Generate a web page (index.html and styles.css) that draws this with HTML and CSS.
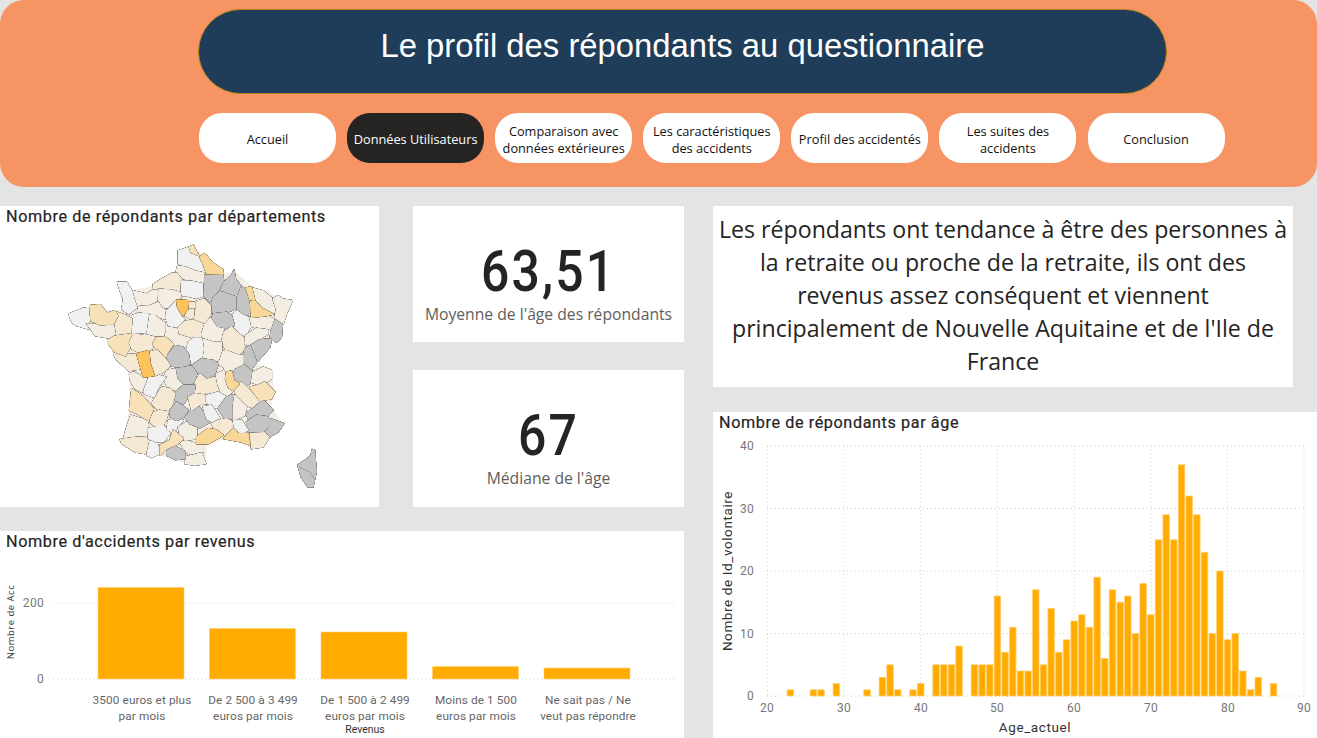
FILE: index.html
```html
<!DOCTYPE html>
<html lang="fr">
<head>
<meta charset="utf-8">
<title>Le profil des répondants au questionnaire</title>
<link rel="stylesheet" href="styles.css">
</head>
<body>
<div class="page">
  <header class="banner">
    <h1 class="headline">Le profil des répondants au questionnaire</h1>
    <nav class="nav">
      <a class="pill single">Accueil</a>
      <a class="pill active single">Données Utilisateurs</a>
      <a class="pill">Comparaison avec données extérieures</a>
      <a class="pill">Les caractéristiques des accidents</a>
      <a class="pill single">Profil des accidentés</a>
      <a class="pill narrow">Les suites des accidents</a>
      <a class="pill single">Conclusion</a>
    </nav>
  </header>
  <main class="board">
    <div class="left">
      <div class="top-row">
        <section class="card map-card">
          <h2 class="card-title">Nombre de répondants par départements</h2>
          <svg class="map" viewBox="0 78 1137 843" aria-label="Carte de France">
            <polygon class="land" points="535,150 580,135 670,218 705,212 760,260 875,302 850,370 815,420 770,490 815,510 825,575 815,620 850,670 800,715 780,745 680,715 620,735 615,790 555,790 480,765 365,725 385,640 390,520 345,470 325,420 260,385 210,365 210,340 268,318 345,330 370,325 352,250 395,270 460,255 530,215"/>
            <g class="dep">
              <polygon class="d4" points="563,140 580,133 590,155 600,168 585,168 570,158"/>
              <polygon class="d1" points="535,150 563,140 570,158 600,170 612,195 615,215 590,210 560,198 535,188"/>
              <polygon class="d2" points="533,195 560,200 590,212 615,217 612,248 575,240 545,232 528,215"/>
              <polygon class="d3" points="460,250 485,235 515,218 530,217 545,235 540,272 510,268 475,265 458,265"/>
              <polygon class="d1" points="545,240 575,242 612,250 612,285 590,292 560,285 543,285"/>
              <polygon class="d0" points="615,222 668,222 672,245 660,272 640,290 635,310 612,285"/>
              <polygon class="d0" points="672,245 697,222 702,208 707,235 725,258 718,280 690,282 660,272"/>
              <polygon class="d0" points="640,290 660,272 690,282 712,290 712,322 680,335 640,340 635,310"/>
              <polygon class="d0" points="712,290 725,258 745,272 750,310 755,345 725,340 712,322"/>
              <polygon class="d2" points="758,262 790,270 820,295 830,320 822,338 785,322 765,300"/>
              <polygon class="d2" points="820,295 835,285 850,295 878,300 860,340 850,370 825,355 830,325"/>
              <polygon class="d0" points="825,357 848,372 845,410 830,425 812,410 815,380"/>
              <polygon class="d2" points="740,350 755,350 800,345 822,355 812,385 770,382 750,375"/>
              <polygon class="d1" points="695,345 712,330 725,340 745,350 752,378 735,410 715,398 700,372"/>
              <polygon class="d0" points="640,340 680,335 695,345 703,372 690,385 660,385 632,365"/>
              <polygon class="d3" points="580,305 612,295 632,315 632,342 615,368 585,365 578,340"/>
              <polygon class="d2" points="475,265 515,268 540,275 543,290 530,298 510,320 485,322 472,300"/>
              <polygon class="d2" points="398,270 440,280 458,268 472,268 470,300 450,312 408,318 398,290"/>
              <polygon class="d1" points="352,245 380,245 395,270 400,292 410,320 385,340 365,325 370,295 360,270"/>
              <polygon class="d2" points="415,318 450,315 475,305 485,322 500,330 495,355 465,345 440,335 412,335"/>
              <polygon class="d1" points="510,320 530,298 545,345 555,360 535,380 505,375 497,350 500,330"/>
              <polygon class="d3" points="535,380 555,362 580,358 612,372 605,410 580,412 538,398"/>
              <polygon class="d2" points="615,370 632,352 650,380 672,385 672,395 665,420 640,425 608,415 605,400"/>
              <polygon class="d3" points="672,395 695,378 715,398 737,415 735,450 710,462 680,450 665,425"/>
              <polygon class="d2" points="737,405 770,383 805,388 805,400 780,415 752,435 735,430"/>
              <polygon class="d0" points="752,435 780,418 815,415 810,440 775,480 765,470 745,440"/>
              <polygon class="d0" points="735,445 750,435 765,470 770,485 752,510 735,505 730,480"/>
              <polygon class="d0" points="700,505 730,490 752,510 765,515 760,540 735,560 705,540"/>
              <polygon class="d2" points="760,515 790,500 815,510 815,535 800,545 775,552 755,545"/>
              <polygon class="d3" points="705,565 725,545 750,570 780,600 765,625 740,615 705,580"/>
              <polygon class="d2" points="660,455 680,450 710,462 730,465 730,490 700,505 700,510 678,515 672,500 655,490"/>
              <polygon class="d2" points="608,415 640,425 665,425 665,450 655,480 635,478 605,475 610,445"/>
              <polygon class="d1" points="580,412 605,412 610,445 605,475 575,495 557,460 565,425"/>
              <polygon class="d0" points="525,435 550,440 565,460 570,490 545,502 510,495 500,468"/>
              <polygon class="d0" points="575,495 605,475 640,480 655,490 645,520 620,537 590,518"/>
              <polygon class="d0" points="525,505 545,502 575,497 590,518 585,545 560,555 530,535"/>
              <polygon class="d2" points="650,520 672,510 680,535 700,570 680,590 660,575 645,545"/>
              <polygon class="d3" points="585,545 600,520 620,537 645,530 650,555 660,578 620,578 585,580"/>
              <polygon class="d2" points="500,510 525,505 530,535 550,555 530,570 505,565 490,535"/>
              <polygon class="d0" points="520,580 550,555 585,555 582,580 565,590 550,610 525,600"/>
              <polygon class="d3" points="460,600 485,560 510,565 525,580 520,600 510,630 480,635 455,610"/>
              <polygon class="d1" points="430,560 445,530 475,525 497,530 475,560 462,590 432,580"/>
              <polygon class="d2" points="388,520 400,515 430,530 440,535 430,560 425,575 405,565 390,540"/>
              <polygon class="d3" points="340,460 350,450 375,460 410,462 420,505 385,510 350,478"/>
              <polygon class="d4" points="325,410 345,400 395,395 390,440 375,465 345,455 325,430"/>
              <polygon class="d3" points="400,400 430,405 470,405 455,445 415,455 395,445 388,425"/>
              <polygon class="d4" points="470,410 490,405 520,430 500,460 495,478 465,440 458,430"/>
              <polygon class="d3" points="450,455 470,448 500,480 510,495 490,515 465,525 455,490"/>
              <polygon class="d2" points="435,345 465,345 495,368 495,390 490,405 465,405 437,398"/>
              <polygon class="d1" points="395,345 415,338 445,340 437,395 395,398"/>
              <polygon class="d3" points="350,335 380,345 395,355 392,395 345,402 338,375"/>
              <polygon class="d1" points="205,340 250,322 268,325 270,360 258,368 265,385 230,375 215,365"/>
              <polygon class="d2" points="260,370 300,372 340,375 345,400 325,412 285,405"/>
              <polygon class="d4" points="268,315 300,312 320,338 345,330 352,345 340,370 300,372 272,360"/>
              <polygon class="d2" points="392,645 440,660 445,675 440,705 410,710 370,715 380,680"/>
              <polygon class="d3" points="360,718 400,712 440,710 450,725 435,760 405,755 365,730"/>
              <polygon class="d1" points="450,720 470,725 480,760 455,772 440,765"/>
              <polygon class="d1" points="443,685 490,675 510,700 490,725 470,725 445,715"/>
              <polygon class="d3" points="450,640 478,630 505,635 497,660 490,675 460,675 450,665"/>
              <polygon class="d1" points="505,660 530,655 550,660 525,690 500,690"/>
              <polygon class="d2" points="540,725 560,722 590,730 610,735 610,755 580,765 555,755"/>
              <polygon class="d2" points="555,770 580,765 605,758 617,790 585,795 555,790"/>
              <polygon class="d2" points="535,680 560,665 590,680 590,715 555,720 540,705"/>
              <polygon class="d0" points="555,650 590,612 615,640 632,665 600,682 570,670"/>
              <polygon class="d0" points="510,630 530,605 565,630 550,650 530,660 510,650"/>
              <polygon class="d3" points="565,590 585,580 620,585 622,610 600,612 575,630"/>
              <polygon class="d1" points="620,585 655,575 680,590 665,620 640,622 620,605"/>
              <polygon class="d1" points="610,620 635,615 660,655 640,667 620,655"/>
              <polygon class="d0" points="680,590 705,582 700,620 695,655 675,655 655,625"/>
              <polygon class="d2" points="705,585 740,620 735,645 700,660 700,620"/>
              <polygon class="d0" points="765,620 790,600 820,628 800,650 770,645 745,655 740,640"/>
              <polygon class="d0" points="740,665 770,645 805,650 810,680 795,695 745,695"/>
              <polygon class="d0" points="810,655 852,670 835,695 805,712 795,697 810,680"/>
              <polygon class="d3" points="752,700 795,697 808,712 790,740 755,745"/>
              <polygon class="d3" points="635,670 655,660 680,655 700,665 700,685 680,710 665,700 640,680"/>
              <polygon class="d1" points="700,662 725,660 745,690 725,700 705,685"/>
              <polygon class="d5" points="672,715 700,685 715,700 745,700 750,735 725,725 700,720"/>
              <polygon class="d5" points="590,710 625,685 650,690 670,705 625,730 590,730"/>
              <polygon class="d0" points="500,750 520,735 555,755 555,775 525,778 500,765"/>
              <polygon class="d4" points="480,735 510,720 520,690 550,715 535,730 500,745 480,765"/>
              <polygon class="d4" points="395,565 430,590 460,625 445,660 410,640 388,630"/>
              <polygon class="d4" points="750,560 775,555 795,545 825,575 815,595 780,600"/>
              <polygon class="d5" points="680,515 695,512 702,540 718,550 700,570 685,560 677,535"/>
              <polygon class="d5" points="600,168 615,158 630,178 650,195 668,205 670,220 620,218 612,195"/>
              <polygon class="d5" points="738,262 755,258 765,300 752,302"/>
              <polygon class="d5" points="752,302 765,300 785,322 820,340 800,345 755,350"/>
              <polygon class="d3" points="565,305 585,305 585,325 565,325"/>
              <polygon class="d3" points="555,345 565,325 582,325 580,350 570,355"/>
              <polygon class="d6" points="530,298 565,300 563,325 548,345 533,320"/>
              <polygon class="d6" points="410,460 445,450 450,490 462,525 430,530 420,495"/>
              <polygon class="d0" points="938,748 945,750 948,790 950,815 940,860 925,860 905,830 895,795 925,775 935,765"/>
            </g>
            <polyline class="seam" points="898,800 930,815 945,838"/>
          </svg>
        </section>
        <div class="kpis">
          <section class="card kpi">
            <div class="kpi-value">63,51</div>
            <div class="kpi-label">Moyenne de l'âge des répondants</div>
          </section>
          <section class="card kpi">
            <div class="kpi-value">67</div>
            <div class="kpi-label">Médiane de l'âge</div>
          </section>
        </div>
      </div>
      <section class="card revenue-card">
        <h2 class="card-title">Nombre d'accidents par revenus</h2>
        <svg class="revenue-chart" viewBox="0 552 684 186">
          <g class="grid">
            <line x1="53" y1="603" x2="676" y2="603"/>
            <line x1="53" y1="679" x2="676" y2="679"/>
          </g>
          <g class="bars">
            <rect x="98" y="587.5" width="86" height="91.5"/>
            <rect x="209.5" y="628.5" width="86" height="50.5"/>
            <rect x="321" y="632" width="86" height="47"/>
            <rect x="432.5" y="666.5" width="86" height="12.5"/>
            <rect x="544" y="668" width="86" height="11"/>
          </g>
          <g class="tick end">
            <text x="44" y="607">200</text>
            <text x="44" y="683">0</text>
          </g>
          <g class="tick mid small">
            <text x="142" y="704">3500 euros et plus</text>
            <text x="142" y="720">par mois</text>
            <text x="253" y="704">De 2 500 à 3 499</text>
            <text x="253" y="720">euros par mois</text>
            <text x="365" y="704">De 1 500 à 2 499</text>
            <text x="365" y="720">euros par mois</text>
            <text x="476" y="704">Moins de 1 500</text>
            <text x="476" y="720">euros par mois</text>
            <text x="588" y="704">Ne sait pas / Ne</text>
            <text x="588" y="720">veut pas répondre</text>
          </g>
          <text class="axis-mini" x="365" y="733">Revenus</text>
          <text class="axis-mini-v" transform="translate(14,622) rotate(-90)">Nombre de Acc</text>
        </svg>
      </section>
    </div>
    <div class="right">
      <section class="card note">Les répondants ont tendance à être des personnes à<br>la retraite ou proche de la retraite, ils ont des<br>revenus assez conséquent et viennent<br>principalement de Nouvelle Aquitaine et de l'Ile de<br>France</section>
      <section class="card age-card">
        <h2 class="card-title">Nombre de répondants par âge</h2>
        <svg class="age-chart" viewBox="713 433 604 305">
          <g class="grid">
            <line x1="767" y1="446" x2="1304" y2="446"/>
            <line x1="767" y1="508.5" x2="1304" y2="508.5"/>
            <line x1="767" y1="571" x2="1304" y2="571"/>
            <line x1="767" y1="633.5" x2="1304" y2="633.5"/>
            <line x1="767" y1="696" x2="1304" y2="696"/>
            <line x1="767.5" y1="446" x2="767.5" y2="696"/>
            <line x1="844" y1="446" x2="844" y2="696"/>
            <line x1="920.5" y1="446" x2="920.5" y2="696"/>
            <line x1="997.5" y1="446" x2="997.5" y2="696"/>
            <line x1="1074" y1="446" x2="1074" y2="696"/>
            <line x1="1151" y1="446" x2="1151" y2="696"/>
            <line x1="1227.5" y1="446" x2="1227.5" y2="696"/>
            <line x1="1304" y1="446" x2="1304" y2="696"/>
          </g>
          <g class="bars hist" transform="translate(767.3,696) scale(7.67,-6.25)">
            <rect x="2.58" width=".85" height="1"/><rect x="5.58" width=".85" height="1"/><rect x="6.58" width=".85" height="1"/><rect x="8.58" width=".85" height="2"/>
            <rect x="12.58" width=".85" height="1"/><rect x="14.58" width=".85" height="3"/><rect x="15.58" width=".85" height="5"/><rect x="16.58" width=".85" height="1"/>
            <rect x="18.58" width=".85" height="1"/><rect x="19.58" width=".85" height="2"/><rect x="21.58" width=".85" height="5"/><rect x="22.58" width=".85" height="5"/>
            <rect x="23.58" width=".85" height="5"/><rect x="24.58" width=".85" height="8"/><rect x="26.58" width=".85" height="5"/><rect x="27.58" width=".85" height="5"/>
            <rect x="28.58" width=".85" height="5"/><rect x="29.58" width=".85" height="16"/><rect x="30.58" width=".85" height="7"/><rect x="31.58" width=".85" height="11"/>
            <rect x="32.58" width=".85" height="4"/><rect x="33.58" width=".85" height="4"/><rect x="34.58" width=".85" height="17"/><rect x="35.58" width=".85" height="5"/>
            <rect x="36.58" width=".85" height="14"/><rect x="37.58" width=".85" height="7"/><rect x="38.58" width=".85" height="9"/><rect x="39.58" width=".85" height="12"/>
            <rect x="40.58" width=".85" height="13"/><rect x="41.58" width=".85" height="11"/><rect x="42.58" width=".85" height="19"/><rect x="43.58" width=".85" height="6"/>
            <rect x="44.58" width=".85" height="17"/><rect x="45.58" width=".85" height="15"/><rect x="46.58" width=".85" height="16"/><rect x="47.58" width=".85" height="10"/>
            <rect x="48.58" width=".85" height="18"/><rect x="49.58" width=".85" height="13"/><rect x="50.58" width=".85" height="25"/><rect x="51.58" width=".85" height="29"/>
            <rect x="52.58" width=".85" height="25"/><rect x="53.58" width=".85" height="37"/><rect x="54.58" width=".85" height="32"/><rect x="55.58" width=".85" height="29"/>
            <rect x="56.58" width=".85" height="23"/><rect x="57.58" width=".85" height="10"/><rect x="58.58" width=".85" height="20"/><rect x="59.58" width=".85" height="9"/>
            <rect x="60.58" width=".85" height="10"/><rect x="61.58" width=".85" height="4"/><rect x="62.58" width=".85" height="1"/><rect x="63.58" width=".85" height="3"/>
            <rect x="65.58" width=".85" height="2"/>
          </g>
          <g class="tick end">
            <text x="754" y="450">40</text>
            <text x="754" y="513">30</text>
            <text x="754" y="575">20</text>
            <text x="754" y="638">10</text>
            <text x="754" y="700">0</text>
          </g>
          <g class="tick mid">
            <text x="767" y="712">20</text>
            <text x="844" y="712">30</text>
            <text x="921" y="712">40</text>
            <text x="997" y="712">50</text>
            <text x="1074" y="712">60</text>
            <text x="1151" y="712">70</text>
            <text x="1228" y="712">80</text>
            <text x="1304" y="712">90</text>
          </g>
          <text class="axis-title" x="1035" y="732">Age_actuel</text>
          <text class="axis-title" transform="translate(732,571) rotate(-90)">Nombre de Id_volontaire</text>
        </svg>
      </section>
    </div>
  </main>
</div>
</body>
</html>
```
FILE: styles.css
```css
* { box-sizing: border-box; }
html, body { margin: 0; padding: 0; }
body { background: #e4e4e4; font-family: "Open Sans", sans-serif; }
.page { width: 1317px; height: 738px; overflow: hidden; background: #e4e4e4; }

.banner {
  height: 187px;
  background: #f69563;
  border-radius: 24px;
  padding: 9px 0 0 198px;
  display: flex;
  flex-direction: column;
  align-items: flex-start;
}
.headline {
  width: 969px;
  height: 85px;
  margin: 0;
  padding-bottom: 11px;
  display: flex;
  align-items: center;
  justify-content: center;
  background: #1f3d58;
  border: 1px solid #b8801a;
  border-radius: 43px;
  color: #fff;
  font: 400 32.85px "Liberation Sans", Arial, sans-serif;
}
.nav { display: flex; gap: 11.1px; margin-top: 19px; margin-left: 1px; }
.pill {
  width: 137px;
  height: 50px;
  padding: 4px 4px 0;
  display: flex;
  align-items: center;
  justify-content: center;
  text-align: center;
  background: #fff;
  border-radius: 23px;
  color: #111;
  font-size: 12.75px;
  line-height: 17px;
}
.pill.single { padding-top: 2px; }
.pill.narrow { padding: 4px 25px 0; }
.pill.active { background: #252423; color: #fff; padding-left: 0; padding-right: 0; white-space: nowrap; }

.board { display: flex; padding-top: 19px; }
.left { width: 684px; display: flex; flex-direction: column; gap: 24px; }
.top-row { display: flex; gap: 34px; height: 301px; }
.right { margin-left: 29px; flex: 1; display: flex; flex-direction: column; gap: 25px; }

.card { background: #fff; }
.card-title {
  margin: 0;
  height: 21px;
  padding-left: 6px;
  color: #252423;
  font: 400 16.2px/21px Roboto, sans-serif;
  letter-spacing: .6px;
  white-space: nowrap;
  -webkit-text-stroke: .2px #252423;
}
.map-card { width: 379px; }
.map { display: block; width: 379px; height: 280px; }
.land { fill: #f3ede2; }
.dep polygon {
  stroke-width: 4;
  stroke-linejoin: round;
  filter: drop-shadow(0 0 1px #5c5c5c) drop-shadow(0 0 1px #5c5c5c) drop-shadow(0 0 .6px #5c5c5c);
}
.seam { fill: none; stroke: #8e8e8e; stroke-width: 2.2; }
.d0 { fill: #c4c4c4; stroke: #c4c4c4; }
.d1 { fill: #f1f1f1; stroke: #f1f1f1; }
.d2 { fill: #f3ede2; stroke: #f3ede2; }
.d3 { fill: #f6e9d3; stroke: #f6e9d3; }
.d4 { fill: #f8e0b8; stroke: #f8e0b8; }
.d5 { fill: #f9d798; stroke: #f9d798; }
.d6 { fill: #ffc35c; stroke: #ffc35c; }

.kpis { width: 271px; display: grid; grid-template-rows: 136px 137px; row-gap: 28px; }
.kpi { display: flex; flex-direction: column; align-items: center; justify-content: flex-start; }
.kpi-value {
  margin-top: 33px;
  font: 500 58px/64px Roboto, sans-serif;
  letter-spacing: 2.5px;
  color: #252423;
  transform: scaleX(.86);
}
.kpi-label { font-size: 15.7px; line-height: 22px; color: #605e5c; }

.revenue-card { height: 207px; }
.revenue-chart { display: block; width: 684px; height: 186px; }
.note {
  width: 580px;
  height: 181px;
  padding-top: 7px;
  text-align: center;
  color: #252423;
  font-size: 23.15px;
  line-height: 33px;
  white-space: nowrap;
}
.age-card { height: 326px; }
.age-chart { display: block; width: 604px; height: 305px; }

.grid line { stroke: #cfcfcf; stroke-width: 1; stroke-dasharray: 1 3; }
.bars rect { fill: #ffab00; stroke: #ffcf70; stroke-width: .6; }
.hist rect { vector-effect: non-scaling-stroke; stroke-width: .8; }
.tick text { font: 400 12px Roboto, sans-serif; fill: #777; letter-spacing: .3px; }
.tick.small text { font-size: 11.8px; fill: #666; letter-spacing: .1px; }
.tick.end text { text-anchor: end; }
.tick.mid text { text-anchor: middle; }
.axis-title { font: 400 13.5px Roboto, sans-serif; fill: #333; text-anchor: middle; letter-spacing: .6px; }
.axis-mini { font: 400 10.5px Roboto, sans-serif; fill: #333; text-anchor: middle; }
.axis-mini-v { font: 400 9.5px "Open Sans", sans-serif; fill: #333; text-anchor: middle; letter-spacing: .5px; }
```
